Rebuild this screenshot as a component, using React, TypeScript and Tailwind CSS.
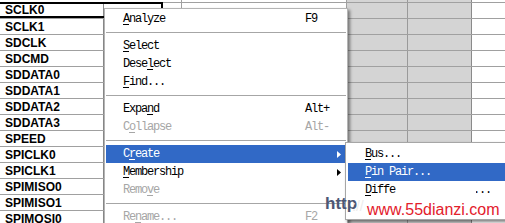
import React from "react";

const rows = [
  "SCLK0",
  "SCLK1",
  "SDCLK",
  "SDCMD",
  "SDDATA0",
  "SDDATA1",
  "SDDATA2",
  "SDDATA3",
  "SPEED",
  "SPICLK0",
  "SPICLK1",
  "SPIMISO0",
  "SPIMISO1",
  "SPIMOSI0",
];

function GridRow({ label, selected }: { label: string; selected?: boolean }) {
  return (
    <div className="flex h-[16px] border-t border-[#a0a0a0]">
      <div
        className={
          selected
            ? "flex w-[163px] border-y-2 border-r-2 border-black -mt-[1px]"
            : "flex w-[163px]"
        }
      >
        <div className="flex w-[104px] items-center pl-[5px] border-r border-[#8a8a8a] font-['Liberation_Sans_Narrow','Liberation_Sans',sans-serif] text-[12px] font-bold leading-none text-black">
          {label}
        </div>
        <div className="flex-1" />
      </div>
      <div className="w-[19px] border-r border-[#a0a0a0]" />
      <div className="w-[165px] border-r border-[#a0a0a0]" />
      <div className="w-[61px] bg-[#d4d4d4] border-r border-[#9a9a9a]" />
      <div className="w-[64px] bg-[#d4d4d4] border-r border-[#8a8a8a]" />
      <div className="flex-1" />
    </div>
  );
}

type ItemProps = {
  label: string;
  u: number;
  shortcut?: string;
  disabled?: boolean;
  active?: boolean;
  arrow?: boolean;
};

function Label({ label, u }: { label: string; u: number }) {
  return (
    <>
      {label.slice(0, u)}
      <span className="underline underline-offset-[2px]">{label[u]}</span>
      {label.slice(u + 1)}
    </>
  );
}

function Item({ label, u, shortcut, disabled, active, arrow }: ItemProps) {
  const color = active ? "text-white" : disabled ? "text-[#a6a6a6]" : "text-black";
  return (
    <div className={`flex h-[18px] items-center pl-[17px] ${active ? "bg-[#3169c6]" : ""} ${color}`}>
      <span className="w-[182px] whitespace-pre">
        <Label label={label} u={u} />
      </span>
      <span className="whitespace-pre">{shortcut}</span>
      {arrow && (
        <svg className="ml-auto mr-[5px]" width="4" height="7" viewBox="0 0 4 7">
          <path d="M0 0 L4 3.5 L0 7 Z" fill={active ? "#ffffff" : "#000000"} />
        </svg>
      )}
    </div>
  );
}

function Sep() {
  return (
    <div className="flex h-[9px] items-center">
      <div className="h-px w-full bg-[#a6a6a6]" />
    </div>
  );
}

const menuFont =
  "font-['Liberation_Mono','DejaVu_Sans_Mono',monospace] text-[12px] tracking-[-1.2px] leading-none";

export default function App() {
  return (
    <div className="relative h-[223px] w-[505px] overflow-hidden bg-white">
      <div className="h-[2px] flex">
        <div className="w-[163px]" />
        <div className="w-[19px] border-r border-[#a0a0a0]" />
        <div className="w-[165px] border-r border-[#a0a0a0]" />
        <div className="w-[61px] bg-[#d4d4d4] border-r border-[#9a9a9a]" />
        <div className="w-[64px] bg-[#d4d4d4] border-r border-[#8a8a8a]" />
      </div>
      {rows.map((r, i) => (
        <GridRow key={r} label={r} selected={i === 0} />
      ))}

      {/* context menu */}
      <div
        className={`absolute left-[104px] top-[8px] w-[244px] border border-[#b4b4b4] bg-white p-px shadow-[2px_2px_3px_rgba(0,0,0,0.45)] ${menuFont}`}
      >
        <Item label="Analyze" u={0} shortcut="F9" />
        <Sep />
        <Item label="Select" u={0} />
        <Item label="Deselect" u={4} />
        <Item label="Find..." u={0} />
        <Sep />
        <Item label="Expand" u={4} shortcut="Alt+" />
        <Item label="Collapse" u={1} shortcut="Alt-" disabled />
        <Sep />
        <Item label="Create" u={1} active arrow />
        <Item label="Membership" u={0} arrow />
        <Item label="Remove" u={4} disabled />
        <Sep />
        <Item label="Rename..." u={2} shortcut="F2" disabled />
      </div>

      {/* submenu */}
      <div
        className={`absolute left-[345px] top-[142px] w-[180px] border border-[#a6a6a6] bg-white px-[2px] pt-[2px] shadow-[2px_2px_3px_rgba(0,0,0,0.5)] ${menuFont}`}
      >
        <Item label="Bus..." u={0} />
        <Item label="Pin Pair..." u={0} active />
        <Item label="Differential Pairs..." u={0} />
        <div className="h-[20px]" />
      </div>

      {/* watermark */}
      <div className="absolute left-[396px] top-[183px] h-[14px] w-[80px] bg-white" />
      <span className="absolute left-[325px] top-[195px] font-['Liberation_Sans',sans-serif] text-[17px] font-bold leading-none text-[#4d5775]">
        http
      </span>
      <span className="absolute left-[352px] top-[199px] font-['Liberation_Sans',sans-serif] text-[14px] leading-none text-[#ececec]">
        ://
      </span>
      <span className="absolute left-[367px] top-[202px] font-['Liberation_Sans',sans-serif] text-[16px] leading-none text-[#e3202c]">
        www.55dianzi.com
      </span>
    </div>
  );
}
